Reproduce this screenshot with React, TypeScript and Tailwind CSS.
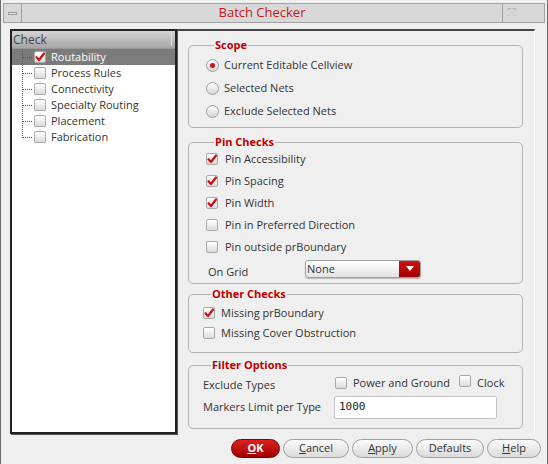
import React from "react";

const font = { fontFamily: '"Open Sans", "Noto Sans", sans-serif' };

function Check({ on }: { on?: boolean }) {
  return (
    <span className="relative inline-flex h-[12px] w-[12px] shrink-0 rounded-[2px] border border-[#a8a8a8] bg-gradient-to-b from-[#ffffff] to-[#dcdcdc]">
      {on && (
        <svg viewBox="0 0 12 12" className="absolute -left-[1px] -top-[1px] h-[12px] w-[12px]">
          <path d="M2.5 6.2 L5 9 L10 2.5" fill="none" stroke="#c8101a" strokeWidth="2.2" strokeLinecap="round" strokeLinejoin="round" />
        </svg>
      )}
    </span>
  );
}

function Radio({ on }: { on?: boolean }) {
  return (
    <span className="inline-flex h-[13px] w-[13px] shrink-0 items-center justify-center rounded-full border border-[#a0a0a0] bg-gradient-to-b from-[#ffffff] to-[#d6d6d6]">
      {on && <span className="h-[5px] w-[5px] rounded-full bg-[#d0101a]" />}
    </span>
  );
}

function Group({ title, children, className }: { title: string; children: React.ReactNode; className?: string }) {
  return (
    <fieldset className={"rounded-[5px] border border-[#b4b4b4] " + (className || "")}>
      <legend className="ml-[8px] px-[1px] text-[11px] font-bold leading-[14px] text-[#c00000]">{title}</legend>
      {children}
    </fieldset>
  );
}

function Btn({ label, u, rest, w, primary }: { label?: string; u: string; rest: string; w: string; primary?: boolean }) {
  return (
    <div
      className={
        "flex h-[19px] items-center justify-center rounded-full border text-[11px] " +
        w +
        (primary
          ? " border-[#7a0000] bg-gradient-to-b from-[#e02020] to-[#a00000] font-bold text-white"
          : " border-[#a0a0a0] bg-gradient-to-b from-[#fbfbfb] to-[#dadada] text-[#333]")
      }
    >
      {label}
      <span className="underline">{u}</span>
      {rest}
    </div>
  );
}

export default function App() {
  const tree = [
    { name: "Routability", on: true, sel: true },
    { name: "Process Rules" },
    { name: "Connectivity" },
    { name: "Specialty Routing" },
    { name: "Placement" },
    { name: "Fabrication" },
  ];

  return (
    <div className="flex h-[464px] w-[548px] flex-col overflow-hidden border-x border-[#6a6a6a] bg-[#efefef] text-[#333]" style={font}>
      {/* TITLE BAR */}
      <div className="mx-[2px] mt-[3px] flex h-[20px] items-stretch border border-[#a0a0a0] bg-[#d8d8d8]">
        <div className="flex w-[18px] items-center justify-center border-r border-[#a0a0a0]">
          <span className="h-[3px] w-[9px] border border-[#9a9a9a] bg-[#e8e8e8]" />
        </div>
        <div className="flex flex-1 items-center justify-center text-[13px] text-[#c01818]">Batch Checker</div>
        <div className="flex w-[18px] items-center justify-center border-l border-[#a0a0a0] text-[12px] text-[#b0b0b0]">⤧</div>
        <div className="w-[24px]" />
      </div>

      {/* MAIN */}
      <div className="mt-[6px] flex h-[405px] pl-[9px] pr-[12px]">
        {/* LEFT TREE */}
        <div className="flex w-[167px] flex-col border-2 border-[#222] bg-white shadow-[1px_1px_0_#555]">
          <div className="flex h-[18px] items-center border-b border-[#999] bg-gradient-to-b from-[#d4d4d4] to-[#a6a6a6] pl-[1px] text-[12px] text-[#444]">
            Check
            <span className="ml-auto mr-[3px] h-[13px] w-px bg-[#e0e0e0]" />
          </div>
          <div className="relative">
            <div className="absolute left-[10px] top-0 h-[89px] border-l border-dotted border-[#555]" />
            {tree.map((t) => (
              <div key={t.name} className={"flex h-[16px] items-center text-[11px] " + (t.sel ? "bg-[#7b7b7b] text-white" : "text-[#333]")}>
                <span className="ml-[10px] mr-[2px] w-[10px] border-t border-dotted border-[#555]" />
                <Check on={t.on} />
                <span className="ml-[5px]">{t.name}</span>
              </div>
            ))}
          </div>
        </div>

        {/* RIGHT FORM */}
        <div className="flex flex-1 flex-col border-t-2 border-r border-t-[#444] border-r-white px-[11px] pt-[7px]">
          <Group title="Scope" className="h-[90px] pl-[17px] text-[11px]">
            <div className="mt-[7px] flex flex-col gap-[10px]">
              {[
                ["Current Editable Cellview", true],
                ["Selected Nets", false],
                ["Exclude Selected Nets", false],
              ].map(([l, on]) => (
                <div key={l as string} className="flex h-[13px] items-center gap-[5px]">
                  <Radio on={on as boolean} />
                  <span>{l}</span>
                </div>
              ))}
            </div>
          </Group>

          <Group title="Pin Checks" className="mt-[7px] h-[149px] pl-[17px] text-[11px]">
            <div className="mt-[4px] flex flex-col gap-[10px]">
              {[
                ["Pin Accessibility", true],
                ["Pin Spacing", true],
                ["Pin Width", true],
                ["Pin in Preferred Direction", false],
                ["Pin outside prBoundary", false],
              ].map(([l, on]) => (
                <div key={l as string} className="flex h-[12px] items-center gap-[7px]">
                  <Check on={on as boolean} />
                  <span>{l}</span>
                </div>
              ))}
            </div>
            <div className="mt-[4px] flex items-center">
              <span className="ml-[2px] mt-[7px] w-[97px]">On Grid</span>
              <div className="flex h-[18px] w-[116px] items-stretch overflow-hidden rounded-[3px] border border-[#a0a0a0] bg-gradient-to-b from-[#ffffff] to-[#e2e2e2] shadow-[0_1px_1px_#bbb]">
                <span className="flex flex-1 items-center pl-[1px]">None</span>
                <span className="flex w-[21px] items-center justify-center bg-gradient-to-b from-[#d41010] to-[#a00000]">
                  <svg width="8" height="5" viewBox="0 0 8 5"><path d="M0 0 H8 L4 5 Z" fill="#fff" /></svg>
                </span>
              </div>
            </div>
          </Group>

          <Group title="Other Checks" className="mt-[3px] h-[66px] pl-[14px] text-[11px]">
            <div className="mt-[6px] flex flex-col gap-[8px]">
              {[
                ["Missing prBoundary", true],
                ["Missing Cover Obstruction", false],
              ].map(([l, on]) => (
                <div key={l as string} className="flex h-[12px] items-center gap-[6px]">
                  <Check on={on as boolean} />
                  <span>{l}</span>
                </div>
              ))}
            </div>
          </Group>

          <Group title="Filter Options" className="mt-[5px] h-[71px] pl-[14px] text-[11px]">
            <div className="mt-[4px] flex h-[14px] items-center">
              <span className="mt-[4px] w-[132px]">Exclude Types</span>
              <Check />
              <span className="ml-[6px]">Power and Ground</span>
              <span className="ml-[9px]"><Check /></span>
              <span className="ml-[6px]">Clock</span>
            </div>
            <div className="mt-[6px] flex items-center">
              <span className="w-[131px]">Markers Limit per Type</span>
              <div className="flex h-[23px] w-[163px] items-center rounded-[2px] border border-[#c4c4c4] bg-white pl-[4px] text-[11px] text-[#222]" style={{ fontFamily: '"DejaVu Sans Mono", monospace' }}>
                1000
              </div>
            </div>
          </Group>
        </div>
      </div>

      {/* BUTTONS */}
      <div className="mt-[5px] flex justify-end gap-[3px] pr-[6px]">
        <Btn u="O" rest="K" w="w-[49px]" primary />
        <Btn u="C" rest="ancel" w="w-[66px]" />
        <Btn u="A" rest="pply" w="w-[61px]" />
        <Btn u="" label="Defaults" rest="" w="w-[68px]" />
        <Btn u="H" rest="elp" w="w-[54px]" />
      </div>
    </div>
  );
}
